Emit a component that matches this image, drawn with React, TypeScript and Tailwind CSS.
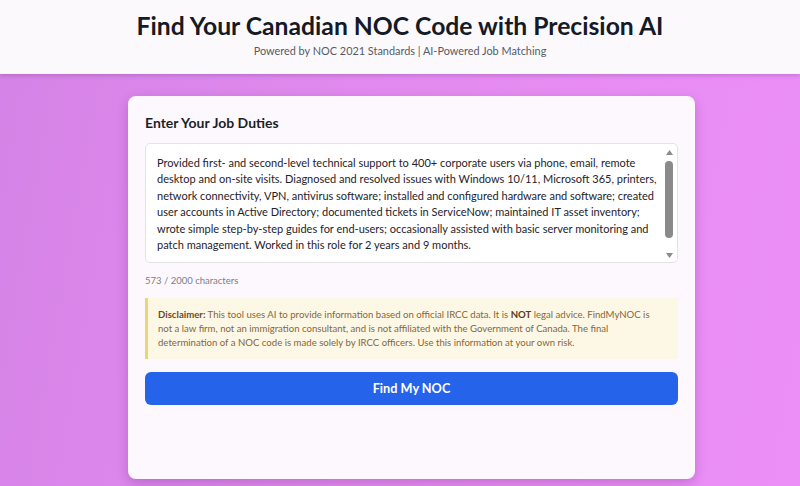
import React from "react";

const lines = [
  "Provided first- and second-level technical support to 400+ corporate users via phone, email, remote",
  "desktop and on-site visits. Diagnosed and resolved issues with Windows 10/11, Microsoft 365, printers,",
  "network connectivity, VPN, antivirus software; installed and configured hardware and software; created",
  "user accounts in Active Directory; documented tickets in ServiceNow; maintained IT asset inventory;",
  "wrote simple step-by-step guides for end-users; occasionally assisted with basic server monitoring and",
  "patch management. Worked in this role for 2 years and 9 months.",
];

export default function App() {
  return (
    <div
      className="w-[800px] h-[486px] overflow-hidden flex flex-col bg-[linear-gradient(100deg,#d583e6_0%,#e48bf0_50%,#ec90f7_100%)]"
      style={{ fontFamily: 'Lato, "Noto Sans", sans-serif' }}
    >
      <header className="h-[74px] shrink-0 bg-[#fcf9fd] shadow-[0_2px_4px_rgba(120,40,140,0.25)] flex flex-col items-center pt-[10px]">
        <h1 className="text-[24.7px] leading-[32px] font-bold text-[#141a26]">
          Find Your Canadian NOC Code with Precision AI
        </h1>
        <p className="text-[10.9px] leading-[16px] mt-[1px] text-[#555b66]">
          Powered by NOC 2021 Standards | AI-Powered Job Matching
        </p>
      </header>

      <div className="flex pl-[128px] pt-[22px]">
        <div className="w-[567px] h-[383px] bg-[#fcf8fe] rounded-[8px] shadow-[0_4px_12px_rgba(90,20,110,0.25)] px-[17px] pt-[17px]">
          <h2 className="text-[14px] leading-[20px] font-bold text-[#1d1f26]">
            Enter Your Job Duties
          </h2>
          <div className="relative mt-[10px] h-[120px] bg-white border border-[#e4e1e8] rounded-[5px] pl-[11px] pt-[11px]">
            <div className="text-[11px] leading-[16.4px] text-[#1f2228]">
              {lines.map((l, i) => (
                <div key={i} className="whitespace-nowrap">
                  {l}
                </div>
              ))}
            </div>
            <div className="absolute right-[2px] top-[3px] w-[12px] h-[114px]">
              <svg width="9" height="7" viewBox="0 0 9 7" className="absolute left-[1.5px] top-[2px]">
                <path d="M4.5 1 L8 6 L1 6 Z" fill="#8a8a8a" />
              </svg>
              <div className="absolute left-[2px] top-[14px] w-[8px] h-[77px] rounded-full bg-[#8a8a8a]" />
              <svg width="9" height="7" viewBox="0 0 9 7" className="absolute left-[1.5px] bottom-[2px]">
                <path d="M1 1 L8 1 L4.5 6 Z" fill="#8a8a8a" />
              </svg>
            </div>
          </div>
          <p className="mt-[11px] text-[9.5px] leading-[14px] text-[#7b7f88]">
            573 / 2000 characters
          </p>
          <div className="mt-[10px] h-[61px] bg-[#fdf8e6] border-l-[3px] border-[#ecd672] pl-[10px] pr-[10px] pt-[10px] text-[9.6px] leading-[14px] text-[#86673a]">
            <div className="whitespace-nowrap">
              <b className="font-bold text-[#6b4a1e]">Disclaimer:</b> This tool uses AI to provide information based on official IRCC data. It is{" "}
              <b className="font-bold text-[#5a3d14]">NOT</b> legal advice. FindMyNOC is
            </div>
            <div className="whitespace-nowrap">
              not a law firm, not an immigration consultant, and is not affiliated with the Government of Canada. The final
            </div>
            <div className="whitespace-nowrap">
              determination of a NOC code is made solely by IRCC officers. Use this information at your own risk.
            </div>
          </div>
          <button className="mt-[13px] w-full h-[33px] rounded-[6px] bg-[#2563eb] text-white text-[12.7px] font-bold">
            Find My NOC
          </button>
        </div>
      </div>
    </div>
  );
}
